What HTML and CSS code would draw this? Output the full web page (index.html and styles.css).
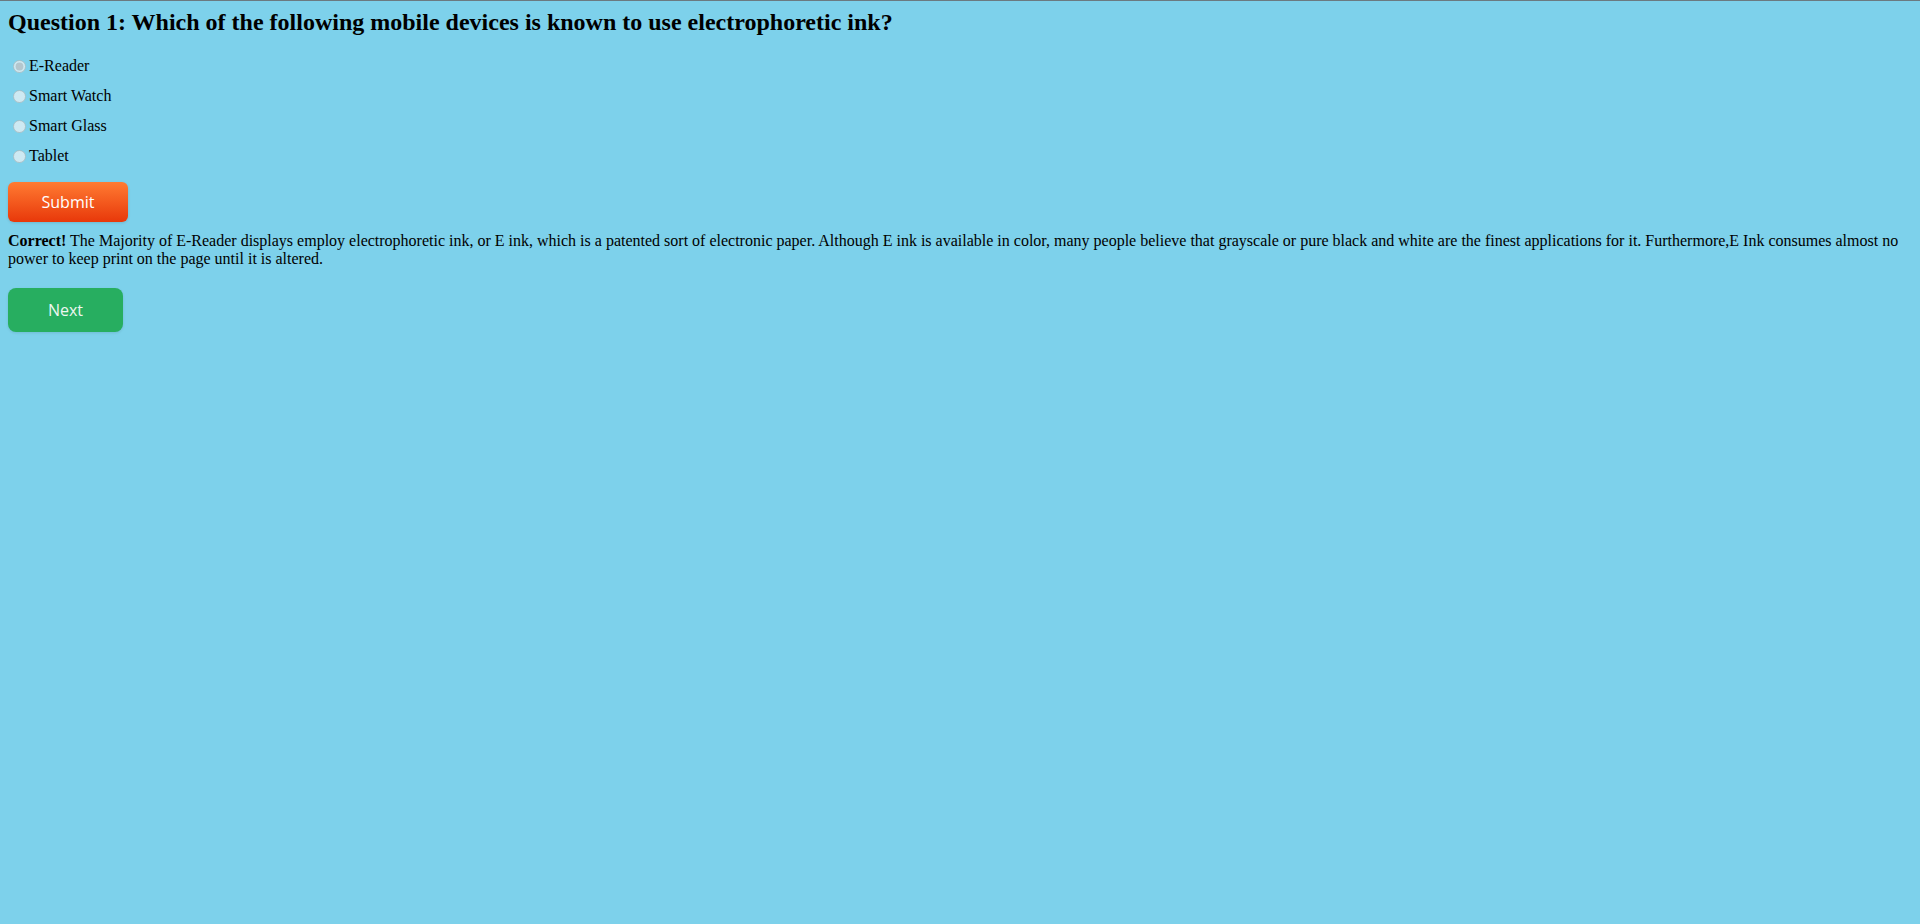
FILE: index.html
```html
<!DOCTYPE html>
<html>
<head>
<meta charset="utf-8">
<title>Quiz</title>
<link rel="stylesheet" href="styles.css">
</head>
<body>
<div class="quiz">
  <h2 class="question">Question 1: Which of the following mobile devices is known to use electrophoretic ink?</h2>
  <div class="options">
    <label class="option"><input type="radio" name="q1" checked disabled>E-Reader</label>
    <label class="option"><input type="radio" name="q1" disabled>Smart Watch</label>
    <label class="option"><input type="radio" name="q1" disabled>Smart Glass</label>
    <label class="option"><input type="radio" name="q1" disabled>Tablet</label>
  </div>
  <button class="btn btn-submit">Submit</button>
  <p class="feedback"><strong>Correct!</strong> The Majority of E-Reader displays employ electrophoretic ink, or E ink, which is a patented sort of electronic paper. Although E ink is available in color, many people believe that grayscale or pure black and white are the finest applications for it. Furthermore,E Ink consumes almost no power to keep print on the page until it is altered.</p>
  <button class="btn btn-next">Next</button>
</div>
</body>
</html>
```

FILE: styles.css
```css
html {
  border-top: 1px solid #6b7a80;
  background: #7dd1eb;
  min-height: 100%;
}
body {
  margin: 0;
  padding: 7px 8px 8px 8px;
  font-family: "Liberation Serif", "Times New Roman", serif;
  font-size: 16px;
  color: #000;
  background: #7dd1eb;
}
.quiz {
  display: flex;
  flex-direction: column;
  align-items: flex-start;
}
.question {
  margin: 0;
  font-size: 24px;
  font-weight: bold;
  line-height: 28px;
}
.options {
  display: flex;
  flex-direction: column;
  margin-top: 15px;
}
.option {
  display: flex;
  align-items: center;
  height: 30px;
}
.option input {
  margin: 0 3px 0 5px;
  width: 13px;
  height: 13px;
}
.btn {
  border: none;
  color: #fff;
  font-family: "Open Sans", "Noto Sans", sans-serif;
  font-size: 16px;
  cursor: pointer;
}
.btn-submit {
  margin-top: 11px;
  width: 120px;
  height: 40px;
  border-radius: 6px;
  background: linear-gradient(to bottom, #ff7b32, #e8380a);
  box-shadow: 0 1px 3px rgba(0, 0, 0, 0.12);
}
.feedback {
  margin: 10px 0 0 0;
  line-height: 18px;
}
.btn-next {
  margin-top: 20px;
  width: 115px;
  height: 44px;
  border-radius: 8px;
  background: #27ae60;
  color: #eef6f0;
  box-shadow: 0 1px 3px rgba(0, 0, 0, 0.1);
}
```
